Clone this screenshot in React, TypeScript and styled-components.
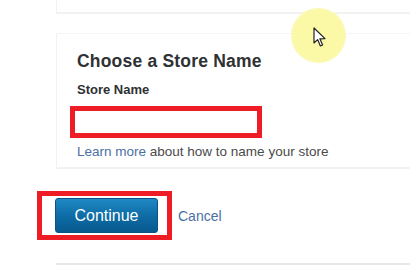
import React from "react";
import styled, { createGlobalStyle } from "styled-components";

const Global = createGlobalStyle`
  html, body {
    margin: 0;
    padding: 0;
    background: #ffffff;
  }
  body {
    font-family: "Liberation Sans", Arial, sans-serif;
    overflow: hidden;
  }
`;

export default function App() {
  return (
    <>
      <Global />
      <Page>
        <PrevCard />
        <Card>
          <Title>Choose a Store Name</Title>
          <Label>Store Name</Label>
          <InputFrame>
            <NameInput type="text" aria-label="Store Name" />
          </InputFrame>
          <Help>
            <Link href="#">Learn more</Link> about how to name your store
          </Help>
        </Card>
        <Actions>
          <ButtonFrame>
            <PrimaryButton>Continue</PrimaryButton>
          </ButtonFrame>
          <Link href="#" $size={14}>
            Cancel
          </Link>
        </Actions>
        <Rule />

        {/* screen-recording click highlight + cursor */}
        <ClickSpot>
          <svg width="14" height="21" viewBox="0 0 14 21">
            <path
              d="M1 1 L1 16 L4.6 12.6 L7.4 19 L9.6 18 L6.9 11.8 L12 11.6 Z"
              fill="#ffffff"
              stroke="#222"
              strokeWidth="1.2"
              strokeLinejoin="round"
            />
          </svg>
        </ClickSpot>
      </Page>
    </>
  );
}

const Page = styled.div`
  position: relative;
  width: 410px;
  height: 279px;
  overflow: hidden;
  background: #ffffff;
`;

const PrevCard = styled.div`
  margin-left: 56px;
  height: 12px;
  border-left: 1px solid #f2f2f2;
  border-bottom: 2px solid #f2f2f2;
`;

const Card = styled.div`
  margin: 19px 0 0 56px;
  height: 136px;
  padding: 17px 0 0 20px;
  box-sizing: border-box;
  border-top: 1px solid #f5f5f5;
  border-left: 1px solid #f2f2f2;
  border-bottom: 2px solid #f2f2f2;
  display: flex;
  flex-direction: column;
  align-items: flex-start;
`;

const Title = styled.h2`
  margin: 0;
  font-size: 17.5px;
  line-height: 20px;
  font-weight: 700;
  color: #2f3133;
  letter-spacing: 0.2px;
`;

const Label = styled.div`
  margin-top: 11px;
  font-size: 13px;
  line-height: 15px;
  font-weight: 700;
  color: #2f3133;
`;

const InputFrame = styled.div`
  margin: 9px 0 0 -7px;
  width: 192px;
  height: 32px;
  box-sizing: border-box;
  border: 5px solid #ee1d25;
  background: #ffffff;
`;

const NameInput = styled.input`
  width: 100%;
  height: 100%;
  border: 0;
  padding: 0 4px;
  box-sizing: border-box;
  background: transparent;
  outline: none;
`;

const Help = styled.p`
  margin: 6px 0 0;
  font-size: 13.5px;
  line-height: 16px;
  color: #4a4a4a;
`;

const Link = styled.a<{ $size?: number }>`
  color: #4c70a3;
  text-decoration: none;
  font-size: ${(p) => (p.$size ? `${p.$size}px` : "inherit")};
`;

const Actions = styled.div`
  margin: 22px 0 0 37px;
  display: flex;
  align-items: center;
  gap: 6px;
`;

const ButtonFrame = styled.div`
  border: 5px solid #ee1d25;
  padding: 2px 9px 2px 13px;
`;

const PrimaryButton = styled.button`
  width: 103px;
  height: 35px;
  border: 1px solid #0a5384;
  border-radius: 3px;
  background: linear-gradient(#1f88c4, #0d6aa3 55%, #085a8e);
  color: #ffffff;
  font-family: "Liberation Sans", Arial, sans-serif;
  font-size: 16px;
  padding: 0;
  cursor: pointer;
`;

const Rule = styled.div`
  margin: 23px 0 0 56px;
  height: 2px;
  background: #e8e8e8;
`;

const ClickSpot = styled.div`
  position: absolute;
  left: 291px;
  top: 8px;
  width: 55px;
  height: 55px;
  border-radius: 50%;
  background: radial-gradient(circle, #fbf8a6 60%, #fcfac4 85%, #fefde8 100%);
  svg {
    position: absolute;
    left: 22px;
    top: 19px;
  }
`;
